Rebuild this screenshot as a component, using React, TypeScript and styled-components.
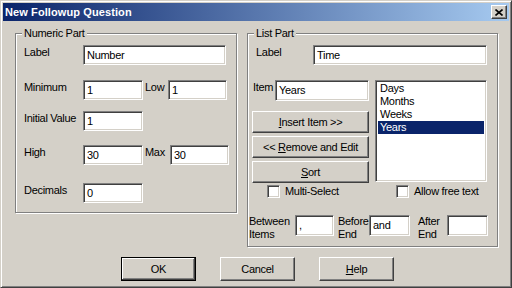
import styled, { createGlobalStyle } from "styled-components";

const GlobalStyle = createGlobalStyle`
  html, body { margin: 0; padding: 0; background: #d4d0c8; }
  * { box-sizing: border-box; }
`;

const Window = styled.div`
  width: 512px;
  height: 288px;
  padding: 2px;
  display: flex;
  flex-direction: column;
  overflow: hidden;
  background: #d4d0c8;
  border: 1px solid;
  border-color: #d4d0c8 #404040 #404040 #d4d0c8;
  box-shadow: inset 1px 1px #fff, inset -1px -1px #808080;
  color: #000;
  font: 11px/13px "Liberation Sans", Arial, sans-serif;
  letter-spacing: -0.3px;
`;

const TitleBar = styled.div`
  flex: none;
  height: 18px;
  display: flex;
  align-items: center;
  justify-content: space-between;
  padding-left: 2px;
  background: linear-gradient(to right, #0a246a, #a6caf0);
`;

const TitleText = styled.span`
  color: #fff;
  font-weight: bold;
  letter-spacing: 0.1px;
  line-height: 18px;
`;

const CloseButton = styled.div`
  width: 16px;
  height: 14px;
  margin-right: 2px;
  display: flex;
  align-items: center;
  justify-content: center;
  background: #d4d0c8;
  border: 1px solid;
  border-color: #fff #404040 #404040 #fff;
  box-shadow: inset -1px -1px #808080;
`;

const Body = styled.div`
  flex: 1;
  display: flex;
  flex-direction: column;
  padding: 6px 11px 0 12px;
`;

const Groups = styled.div`
  display: flex;
  align-items: flex-start;
  gap: 10px;
`;

const Group = styled.fieldset<{ $w: number; $h: number }>`
  margin: 0;
  padding: 0;
  min-width: 0;
  width: ${(p) => p.$w}px;
  height: ${(p) => p.$h}px;
  border: 1px solid #808080;
  box-shadow: 1px 1px 0 #fff, inset 1px 1px 0 #fff;
`;

const Caption = styled.legend`
  margin-left: 6px;
  padding: 0 2px;
  background: #d4d0c8;
  line-height: 13px;
`;

const Pane = styled.div<{ $pl: number }>`
  display: flex;
  flex-direction: column;
  padding: 5px 0 0 ${(p) => p.$pl}px;
`;

const Row = styled.div<{ $mt?: number; $ml?: number }>`
  display: flex;
  align-items: flex-start;
  margin-top: ${(p) => p.$mt ?? 0}px;
  margin-left: ${(p) => p.$ml ?? 0}px;
`;

const FieldLabel = styled.span<{ $w: number; $ml?: number; $pt?: number }>`
  flex: none;
  width: ${(p) => p.$w}px;
  margin-left: ${(p) => p.$ml ?? 0}px;
  padding-top: ${(p) => p.$pt ?? 1}px;
  white-space: nowrap;
`;

const sunken = `
  background: #fff;
  border: 1px solid;
  border-color: #808080 #fff #fff #808080;
  box-shadow: inset 1px 1px #404040, inset -1px -1px #d4d0c8;
`;

const TextBox = styled.div<{ $w: number; $h?: number }>`
  ${sunken}
  flex: none;
  width: ${(p) => p.$w}px;
  height: ${(p) => p.$h ?? 20}px;
  padding: 0 3px;
  display: flex;
  align-items: center;
  white-space: nowrap;
`;

const Columns = styled.div`
  display: flex;
  align-items: flex-start;
  gap: 6px;
  margin: 15px 0 0 3px;
`;

const ButtonStack = styled.div`
  width: 117px;
  display: flex;
  flex-direction: column;
`;

const PushButton = styled.div<{ $w?: number; $h?: number; $mt?: number; $default?: boolean }>`
  width: ${(p) => (p.$w ? `${p.$w}px` : "100%")};
  height: ${(p) => p.$h ?? 22}px;
  margin-top: ${(p) => p.$mt ?? 0}px;
  display: flex;
  align-items: center;
  justify-content: center;
  background: #d4d0c8;
  white-space: nowrap;
  ${(p) =>
    p.$default
      ? `
    border: 1px solid #000;
    box-shadow: inset -1px -1px #404040, inset 1px 1px #fff, inset -2px -2px #808080;
  `
      : `
    border: 1px solid;
    border-color: #fff #404040 #404040 #fff;
    box-shadow: inset -1px -1px #808080;
  `}
`;

const ListBox = styled.div`
  ${sunken}
  width: 112px;
  height: 102px;
  padding: 1px 2px;
  display: flex;
  flex-direction: column;
`;

const ListItem = styled.div<{ $selected?: boolean }>`
  height: 13px;
  line-height: 13px;
  padding-left: 2px;
  background: ${(p) => (p.$selected ? "#0a246a" : "transparent")};
  color: ${(p) => (p.$selected ? "#fff" : "#000")};
`;

const CheckRow = styled.div`
  display: flex;
  align-items: center;
  margin: 2px 0 0 18px;
`;

const Check = styled.label<{ $w?: number }>`
  display: flex;
  align-items: center;
  gap: 5px;
  width: ${(p) => (p.$w ? `${p.$w}px` : "auto")};
`;

const CheckBox = styled.span`
  ${sunken}
  width: 13px;
  height: 13px;
  flex: none;
`;

const Footer = styled.div`
  display: flex;
  justify-content: center;
  gap: 24px;
  margin-top: 10px;
  padding-left: 2px;
`;

const days = ["Days", "Months", "Weeks", "Years"];

export default function App() {
  return (
    <>
      <GlobalStyle />
      <Window>
        <TitleBar>
          <TitleText>New Followup Question</TitleText>
          <CloseButton>
            <svg width="8" height="7" viewBox="0 0 8 7">
              <path d="M0.5 0.5 L7.5 6.5 M7.5 0.5 L0.5 6.5" stroke="#000" strokeWidth="1.6" />
            </svg>
          </CloseButton>
        </TitleBar>
        <Body>
          <Groups>
            <Group $w={222} $h={186}>
              <Caption>Numeric Part</Caption>
              <Pane $pl={8}>
                <Row>
                  <FieldLabel $w={59}>Label</FieldLabel>
                  <TextBox $w={143}>Number</TextBox>
                </Row>
                <Row $mt={15}>
                  <FieldLabel $w={59}>Minimum</FieldLabel>
                  <TextBox $w={60}>1</TextBox>
                  <FieldLabel $w={23} $ml={2}>Low</FieldLabel>
                  <TextBox $w={59}>1</TextBox>
                </Row>
                <Row $mt={11}>
                  <FieldLabel $w={59}>Initial Value</FieldLabel>
                  <TextBox $w={60}>1</TextBox>
                </Row>
                <Row $mt={14}>
                  <FieldLabel $w={59}>High</FieldLabel>
                  <TextBox $w={60}>30</TextBox>
                  <FieldLabel $w={25} $ml={2}>Max</FieldLabel>
                  <TextBox $w={59}>30</TextBox>
                </Row>
                <Row $mt={18}>
                  <FieldLabel $w={59}>Decimals</FieldLabel>
                  <TextBox $w={60}>0</TextBox>
                </Row>
              </Pane>
            </Group>
            <Group $w={251} $h={220}>
              <Caption>List Part</Caption>
              <Pane $pl={1}>
                <Row $ml={7}>
                  <FieldLabel $w={57}>Label</FieldLabel>
                  <TextBox $w={174}>Time</TextBox>
                </Row>
                <Columns>
                  <ButtonStack>
                    <Row $ml={1}>
                      <FieldLabel $w={22}>Item</FieldLabel>
                      <TextBox $w={94} $h={21}>Years</TextBox>
                    </Row>
                    <PushButton $mt={10}>
                      <span><u>I</u>nsert Item &gt;&gt;</span>
                    </PushButton>
                    <PushButton $mt={3}>
                      <span>&lt;&lt; <u>R</u>emove and Edit</span>
                    </PushButton>
                    <PushButton $mt={3}>
                      <span><u>S</u>ort</span>
                    </PushButton>
                  </ButtonStack>
                  <ListBox>
                    {days.map((d) => (
                      <ListItem key={d} $selected={d === "Years"}>
                        {d}
                      </ListItem>
                    ))}
                  </ListBox>
                </Columns>
                <CheckRow>
                  <Check $w={129}>
                    <CheckBox />
                    Multi-Select
                  </Check>
                  <Check>
                    <CheckBox />
                    Allow free text
                  </Check>
                </CheckRow>
                <Row $mt={17}>
                  <FieldLabel $w={46} $pt={0}>
                    Between
                    <br />
                    Items
                  </FieldLabel>
                  <TextBox $w={39} $h={21}>,</TextBox>
                  <FieldLabel $w={31} $ml={4} $pt={0}>
                    Before
                    <br />
                    End
                  </FieldLabel>
                  <TextBox $w={41} $h={21}>and</TextBox>
                  <FieldLabel $w={29} $ml={8} $pt={0}>
                    After
                    <br />
                    End
                  </FieldLabel>
                  <TextBox $w={41} $h={21} />
                </Row>
              </Pane>
            </Group>
          </Groups>
          <Footer>
            <PushButton $w={75} $h={24} $default>
              OK
            </PushButton>
            <PushButton $w={75} $h={24}>
              Cancel
            </PushButton>
            <PushButton $w={75} $h={24}>
              <span><u>H</u>elp</span>
            </PushButton>
          </Footer>
        </Body>
      </Window>
    </>
  );
}
